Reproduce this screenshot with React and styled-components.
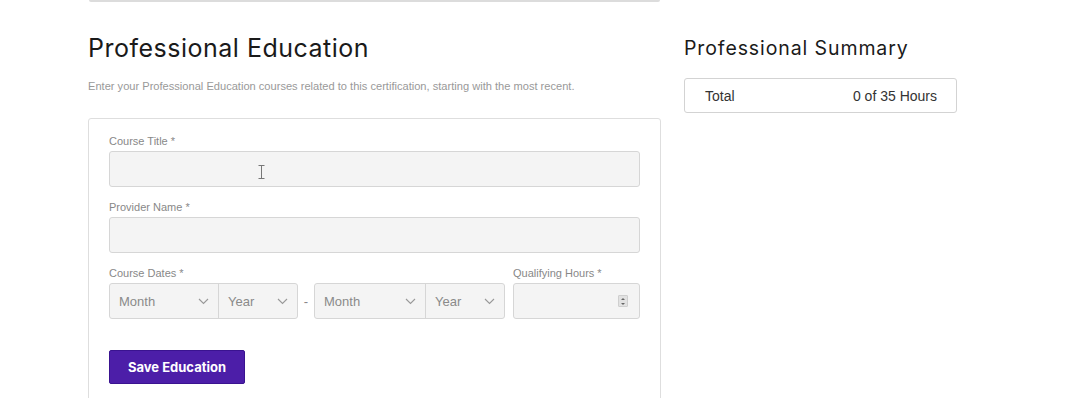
import React from "react";
import styled, { createGlobalStyle } from "styled-components";

const GlobalStyle = createGlobalStyle`
  body {
    margin: 0;
    background: #fff;
    font-family: "Liberation Sans", Arial, sans-serif;
  }
`;

const Page = styled.div`
  display: flex;
  align-items: flex-start;
  padding-left: 88px;
  height: 398px;
  overflow: hidden;
`;

const Main = styled.div`
  width: 573px;
  display: flex;
  flex-direction: column;
`;

const PrevCardEdge = styled.div`
  height: 2px;
  margin: 0 1px;
  background: #dcdcdc;
  border-radius: 0 0 3px 3px;
`;

const Heading = styled.h2`
  margin: 31px 0 0;
  font-family: Inter, "Noto Sans", sans-serif;
  font-weight: 400;
  font-size: ${({ $size }) => $size || 25}px;
  line-height: 30px;
  color: #1a1a1a;
  letter-spacing: 0.5px;
`;

const Intro = styled.p`
  margin: 16px 0 0;
  font-size: 11.1px;
  line-height: 14px;
  color: #999;
`;

const Card = styled.div`
  position: relative;
  margin-top: 25px;
  border: 1px solid #dedede;
  border-radius: 3px;
  padding: 16px 20px 40px;
  display: flex;
  flex-direction: column;
  gap: 14px;
`;

const Field = styled.div`
  display: flex;
  flex-direction: column;
  gap: 4px;
  width: ${({ $width }) => ($width ? `${$width}px` : "auto")};
`;

const Label = styled.label`
  font-size: 11px;
  line-height: 12px;
  color: #888;
`;

const TextInput = styled.div`
  height: 36px;
  box-sizing: border-box;
  background: #f4f4f4;
  border: 1px solid #d6d6d6;
  border-radius: 3px;
`;

const DateRow = styled.div`
  display: flex;
  align-items: flex-end;
  gap: 8px;
`;

const DateRange = styled.div`
  display: flex;
  align-items: center;
`;

const SelectGroup = styled.div`
  display: flex;
  height: 36px;
  box-sizing: border-box;
  background: #f4f4f4;
  border: 1px solid #d6d6d6;
  border-radius: 3px;
`;

const Select = styled.div`
  width: ${({ $width }) => $width}px;
  box-sizing: border-box;
  display: flex;
  align-items: center;
  justify-content: space-between;
  padding: 0 9px;
  font-size: 13px;
  color: #8a8a8a;
  & + & {
    border-left: 1px solid #d6d6d6;
  }
`;

const Dash = styled.span`
  width: 16px;
  text-align: center;
  font-size: 13px;
  color: #888;
`;

const NumberInput = styled(TextInput)`
  display: flex;
  align-items: center;
  justify-content: flex-end;
  padding-right: 11px;
`;

const Spinner = styled.span`
  width: 8px;
  height: 10px;
  background: #e2e2e2;
  border: 1px solid #cfcfcf;
  border-radius: 1px;
  display: flex;
  flex-direction: column;
  align-items: center;
  justify-content: space-around;
  &::before,
  &::after {
    content: "";
    border-left: 2px solid transparent;
    border-right: 2px solid transparent;
  }
  &::before {
    border-bottom: 2px solid #666;
  }
  &::after {
    border-top: 2px solid #666;
  }
`;

const SaveButton = styled.button`
  align-self: flex-start;
  margin-top: 17px;
  width: 136px;
  height: 34px;
  background: #4c1ea8;
  border: 1px solid #3a1390;
  border-radius: 2px;
  color: #fff;
  font-family: Inter, "Noto Sans", sans-serif;
  font-weight: 700;
  font-size: 13px;
  cursor: pointer;
`;

const Cursor = styled.svg`
  position: absolute;
  left: 169px;
  top: 46px;
`;

const Aside = styled.div`
  margin-left: 23px;
  display: flex;
  flex-direction: column;
`;

const SummaryHeading = styled(Heading)`
  margin-top: 36px;
  line-height: 24px;
  letter-spacing: 0.9px;
`;

const SummaryBox = styled.div`
  margin-top: 18px;
  width: 273px;
  height: 35px;
  box-sizing: border-box;
  border: 1px solid #d3d3d3;
  border-radius: 3px;
  display: flex;
  align-items: center;
  justify-content: space-between;
  padding: 0 19px 0 20px;
  font-size: 14px;
  color: #333;
`;

const Chevron = () => (
  <svg width="11" height="7" viewBox="0 0 11 7" fill="none">
    <path d="M1 1l4.5 4.5L10 1" stroke="#999" strokeWidth="1.1" />
  </svg>
);

const DropDown = ({ label, width }) => (
  <Select $width={width}>
    <span>{label}</span>
    <Chevron />
  </Select>
);

export default function App() {
  return (
    <>
      <GlobalStyle />
      <Page>
        <Main>
          <PrevCardEdge />
          <Heading>Professional Education</Heading>
          <Intro>
            Enter your Professional Education courses related to this certification, starting with the most recent.
          </Intro>
          <Card>
            <Field>
              <Label>Course Title *</Label>
              <TextInput />
            </Field>
            <Field>
              <Label>Provider Name *</Label>
              <TextInput />
            </Field>
            <DateRow>
              <Field>
                <Label>Course Dates *</Label>
                <DateRange>
                  <SelectGroup>
                    <DropDown label="Month" width={108} />
                    <DropDown label="Year" width={79} />
                  </SelectGroup>
                  <Dash>-</Dash>
                  <SelectGroup>
                    <DropDown label="Month" width={110} />
                    <DropDown label="Year" width={79} />
                  </SelectGroup>
                </DateRange>
              </Field>
              <Field $width={127}>
                <Label>Qualifying Hours *</Label>
                <NumberInput>
                  <Spinner />
                </NumberInput>
              </Field>
            </DateRow>
            <SaveButton>Save Education</SaveButton>
            <Cursor width="7" height="14" viewBox="0 0 7 14">
              <path d="M0.5 0.5h6M3.5 0.5v13M0.5 13.5h6" stroke="#777" strokeWidth="1" fill="none" />
            </Cursor>
          </Card>
        </Main>
        <Aside>
          <SummaryHeading $size={19.5}>Professional Summary</SummaryHeading>
          <SummaryBox>
            <span>Total</span>
            <span>0 of 35 Hours</span>
          </SummaryBox>
        </Aside>
      </Page>
    </>
  );
}
